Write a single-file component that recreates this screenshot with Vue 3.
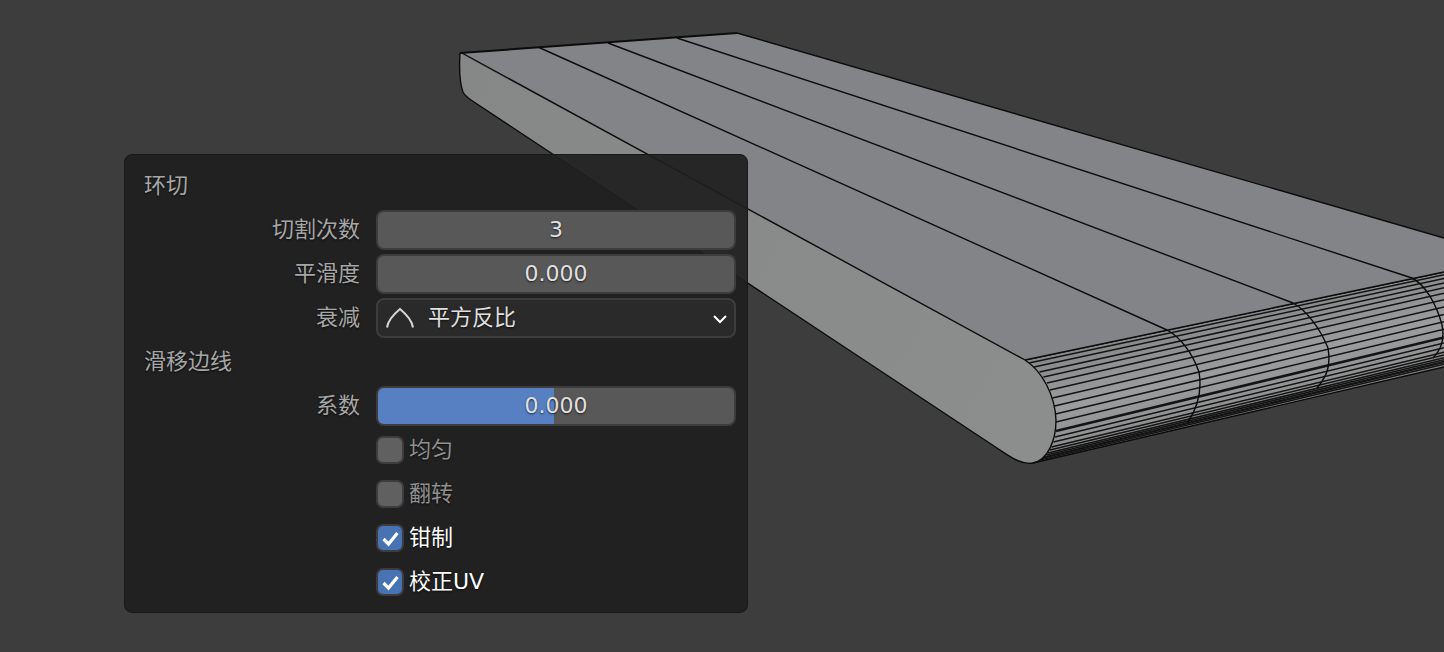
<script setup>
const capCurve = [
  [360, 1025], [363, 1029], [367, 1034], [372, 1039.5], [377, 1043.5], [383, 1047], [390, 1050],
  [398, 1052.5], [406, 1054.5], [414, 1055.5], [422, 1056], [431, 1056], [437, 1055],
  [442, 1053.5], [447, 1051.5], [450, 1050], [453, 1048], [455, 1046.5], [457, 1044.5],
  [458, 1043], [460, 1040]
]
const stripes = capCurve.map(([y, x]) => ({
  x, y, ry: 272 + ((y - 360) / 103) * 95, w: y === 431 ? 2.6 : 1.5
}))
const sliderFactor = 0.494
const checks = [
  { label: '均匀', on: false },
  { label: '翻转', on: false },
  { label: '钳制', on: true },
  { label: '校正UV', on: true }
]
</script>

<template>
  <div class="viewport">
    <svg class="mesh" width="1444" height="652" viewBox="0 0 1444 652">
      <defs>
        <linearGradient id="cyl" gradientUnits="userSpaceOnUse" x1="1215" y1="315" x2="1240" y2="425">
          <stop offset="0" stop-color="#858789" />
          <stop offset="0.5" stop-color="#9c9d9f" />
          <stop offset="0.78" stop-color="#909192" />
          <stop offset="1" stop-color="#707172" />
        </linearGradient>
        <linearGradient id="front" gradientUnits="userSpaceOnUse" x1="480" y1="80" x2="1040" y2="420">
          <stop offset="0" stop-color="#868887" />
          <stop offset="1" stop-color="#8b8e8c" />
        </linearGradient>
      </defs>
      <path d="M460 53 C459 70 460 84 463 92 C465 96 468 98 471 100 L1000 450 C1012 458 1022 465 1033 463 C1048 460 1056 440 1056 420 C1055 395 1042 371 1025 360 Z" fill="url(#front)" />
      <path d="M1025 360 L1444 272 L1444 367 L1033 463 C1048 460 1056 440 1056 420 C1055 395 1042 371 1025 360 Z" fill="url(#cyl)" />
      <g stroke="#141414" fill="none">
        <line v-for="s in stripes" :key="s.y" :x1="s.x" :y1="s.y" x2="1444" :y2="s.ry" :stroke-width="s.w" />
      </g>
      <path d="M460 53 L737 33 L1444 238 L1444 272 L1025 360 Z" fill="#838487" />
      <g fill="none" stroke="#0c0c0c" stroke-width="1.4">
        <path d="M1025 360 C1042 371 1055 395 1056 420 C1056 440 1048 460 1033 463 C1022 465 1012 458 1000 450 L471 100 C468 98 465 96 463 92 C460 84 459 70 460 53" />
        <path d="M460 53 L737 33" stroke-width="2" />
        <path d="M737 33 L1444 238" />
        <path d="M462 53 L1025 360" />
        <path d="M538 47 L1167 330 C1180 337 1192 352 1199 372 C1202 390 1198 407 1188 422" />
        <path d="M608 43 L1293 303 C1306 310 1320 328 1328 348 C1331 366 1327 376 1317 388" />
        <path d="M677 38 L1412 278 C1424 284 1436 302 1442 325 C1445 340 1441 350 1433 358" />
        <path d="M1025 360 L1444 272" />
        <path d="M1033 463 L1444 367" />
      </g>
    </svg>

    <section class="panel">
      <div class="row title"><span class="cjk">环切</span></div>

      <div class="row">
        <span class="label cjk">切割次数</span>
        <div class="field number"><span class="value">3</span></div>
      </div>
      <div class="row">
        <span class="label cjk">平滑度</span>
        <div class="field number"><span class="value">0.000</span></div>
      </div>
      <div class="row">
        <span class="label cjk">衰减</span>
        <div class="field select">
          <svg class="curve" width="30" height="22" viewBox="0 0 30 22">
            <path d="M2 20.5 C3 13 9 7 15 2 C21 7 27 13 28 20.500" />
          </svg>
          <span class="select-text cjk">平方反比</span>
          <svg class="chevron" width="16" height="10" viewBox="0 0 16 10">
            <path d="M2 2 L8 8 L14 2" />
          </svg>
        </div>
      </div>

      <div class="row title"><span class="cjk">滑移边线</span></div>

      <div class="row">
        <span class="label cjk">系数</span>
        <div class="field number slider">
          <div class="fill" :style="{ width: sliderFactor * 100 + '%' }"></div>
          <span class="value">0.000</span>
        </div>
      </div>

      <div v-for="c in checks" :key="c.label" class="row">
        <span></span>
        <div class="check" :class="{ on: c.on }">
          <span class="box">
            <svg v-if="c.on" width="19" height="17" viewBox="0 0 19 17">
              <path d="M2.500 9 L7.500 14 L16.500 3" />
            </svg>
          </span>
          <span class="check-label cjk">{{ c.label }}</span>
        </div>
      </div>
    </section>
  </div>
</template>

<style>
html, body { background: #3d3d3d; overflow: hidden; }
</style>

<style scoped>
.viewport {
  position: relative;
  width: 1444px;
  height: 652px;
  overflow: hidden;
  background: #3d3d3d;
  font-family: "DejaVu Sans", "Noto Sans CJK SC", sans-serif;
  font-size: 22px;
}
.mesh { position: absolute; left: 0; top: 0; display: block; }
.panel {
  position: absolute;
  left: 124px;
  top: 154px;
  width: 624px;
  height: 459px;
  box-sizing: border-box;
  padding: 11px 11px 0 19px;
  background: rgba(31, 31, 31, 0.93);
  border: 1px solid #191919;
  border-radius: 8px;
  display: flex;
  flex-direction: column;
  gap: 4px;
  text-shadow: 0 1px 2px rgba(0, 0, 0, 0.7);
}
.row {
  height: 40px;
  display: grid;
  grid-template-columns: 1fr 360px;
  column-gap: 16px;
  align-items: center;
  flex: none;
}
.title {
  display: flex;
  color: #a6a6a6;
}
.cjk { padding-bottom: 7px; }
.label { text-align: right; color: #a6a6a6; }
.field {
  height: 40px;
  box-sizing: border-box;
  border: 2px solid #3d3d3d;
  border-radius: 8px;
  overflow: hidden;
}
.number {
  position: relative;
  background: #585858;
  color: #e0e0e0;
  display: flex;
  align-items: center;
  justify-content: center;
}
.select {
  background: #2a2a2a;
  color: #e0e0e0;
  display: flex;
  align-items: center;
  padding: 0 6px 0 7px;
}
.curve { flex: none; }
.curve path { fill: none; stroke: #d6d6d6; stroke-width: 2; }
.select-text { margin-left: 13px; flex: 1; }
.chevron { flex: none; margin-top: 2px; }
.chevron path { fill: none; stroke: #ffffff; stroke-width: 2; }
.fill {
  position: absolute;
  left: 0;
  top: 0;
  bottom: 0;
  background: #5680c2;
}
.value { position: relative; padding-bottom: 2px; }
.check { display: flex; align-items: center; gap: 5px; color: #8f8f8f; }
.check.on { color: #ffffff; }
.box {
  width: 28px;
  height: 28px;
  box-sizing: border-box;
  border: 2px solid #3d3d3d;
  border-radius: 7px;
  background: #606060;
  display: flex;
  align-items: center;
  justify-content: center;
  flex: none;
}
.check.on .box { background: #4772b3; }
.box path { fill: none; stroke: #ffffff; stroke-width: 3.2; }
</style>
